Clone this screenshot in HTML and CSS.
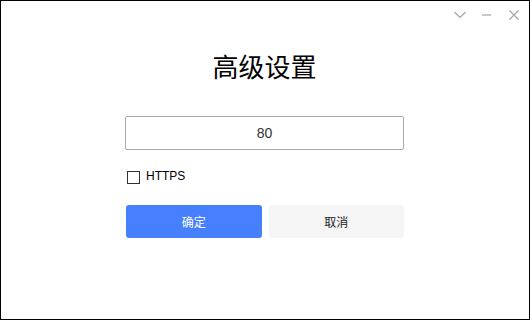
FILE: index.html
```html
<!DOCTYPE html>
<html>
<head>
<meta charset="utf-8">
<link rel="stylesheet" href="styles.css">
</head>
<body>
<div class="window">
  <div class="titlebar">
    <span class="ctl">
      <svg width="12" height="8" viewBox="0 0 12 8"><path d="M0.5 1 L6 6.5 L11.5 1" fill="none" stroke="#a3a3a3" stroke-width="1.2"/></svg>
    </span>
    <span class="ctl">
      <svg width="9" height="2" viewBox="0 0 9 2"><path d="M0 1 H9" fill="none" stroke="#a3a3a3" stroke-width="1.2"/></svg>
    </span>
    <span class="ctl">
      <svg width="10" height="10" viewBox="0 0 10 10"><path d="M0.5 0.5 L9.5 9.5 M9.5 0.5 L0.5 9.5" fill="none" stroke="#a3a3a3" stroke-width="1.2"/></svg>
    </span>
  </div>
  <div class="content">
    <h1 class="title">高级设置</h1>
    <div class="field">80</div>
    <label class="check"><span class="box"></span><span class="check-label">HTTPS</span></label>
    <div class="buttons">
      <button class="btn primary">确定</button>
      <button class="btn secondary">取消</button>
    </div>
  </div>
</div>
</body>
</html>
```
FILE: styles.css
```css
html, body {
  margin: 0;
  padding: 0;
  background: #fff;
}
.window {
  box-sizing: border-box;
  width: 530px;
  height: 320px;
  border: 1px solid #000;
  background: #fff;
  font-family: "Noto Sans CJK SC", "Liberation Sans", sans-serif;
}
.titlebar {
  display: flex;
  justify-content: flex-end;
  align-items: center;
  height: 28px;
  padding-right: 2px;
}
.ctl {
  width: 27px;
  height: 28px;
  display: flex;
  align-items: center;
  justify-content: center;
}
.content {
  width: 279px;
  margin-left: 124px;
  display: flex;
  flex-direction: column;
}
.title {
  margin: 19px 0 0 0;
  font-weight: normal;
  font-size: 26px;
  line-height: 36px;
  text-align: center;
  color: #000;
  font-family: "Noto Sans CJK SC", sans-serif;
}
.field {
  box-sizing: border-box;
  margin-top: 32px;
  height: 34px;
  border: 1px solid #a9a9a9;
  border-radius: 2px;
  display: flex;
  align-items: center;
  justify-content: center;
  font-family: "Liberation Sans", sans-serif;
  font-size: 14px;
  color: #333;
}
.check {
  display: flex;
  align-items: center;
  margin-top: 20px;
  margin-left: 2px;
  height: 14px;
}
.box {
  box-sizing: border-box;
  width: 13px;
  height: 13px;
  border: 1px solid #333;
  background: #fff;
}
.check-label {
  margin-left: 6px;
  font-family: "Liberation Sans", sans-serif;
  font-size: 12px;
  color: #000;
  position: relative;
  top: -1px;
}
.buttons {
  display: flex;
  gap: 7px;
  margin-top: 21px;
  margin-left: 1px;
  margin-right: 0;
}
.btn {
  flex: 1;
  height: 33px;
  border: none;
  border-radius: 3px;
  font-family: "Noto Sans CJK SC", sans-serif;
  font-size: 12px;
  padding: 0;
}
.primary {
  background: #4680ff;
  color: #fff;
}
.secondary {
  background: #f5f5f5;
  color: #222;
}
```
